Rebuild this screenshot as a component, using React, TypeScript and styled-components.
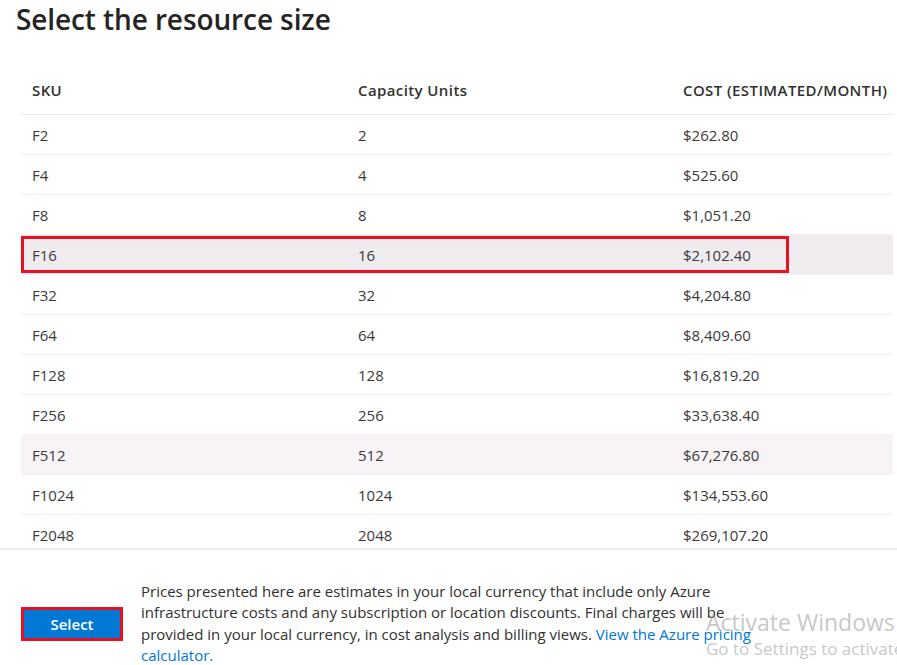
import React from "react";
import styled, { createGlobalStyle } from "styled-components";

const GlobalStyle = createGlobalStyle`
  html, body {
    margin: 0;
    padding: 0;
    background: #fff;
  }
  body {
    font-family: "Open Sans", "Noto Sans", "Liberation Sans", sans-serif;
    color: #323130;
    overflow: hidden;
  }
`;

const Page = styled.div`
  position: relative;
  width: 897px;
  height: 665px;
  overflow: hidden;
  display: flex;
  flex-direction: column;
`;

const Title = styled.h1`
  margin: 0;
  padding: 0 0 0 16px;
  height: 40px;
  flex-shrink: 0;
  line-height: 38px;
  font-size: 28px;
  font-weight: 600;
  color: #252423;
  letter-spacing: -0.1px;
`;

const TableArea = styled.div`
  margin-top: 30px;
  height: 478px;
  flex-shrink: 0;
  overflow: hidden;
  padding: 0 4px 0 21px;
`;

const Row = styled.div<{ $header?: boolean; $bg?: string; $boxed?: boolean }>`
  position: relative;
  display: grid;
  grid-template-columns: 326px 325px 1fr;
  align-items: center;
  height: ${(p) => (p.$header ? "45px" : "40px")};
  border-bottom: ${(p) => (p.$header ? "1px solid #edebe9" : "1px solid #f3f2f1")};
  box-sizing: border-box;
  background: ${(p) => p.$bg || "transparent"};
  font-size: 15px;
  letter-spacing: ${(p) => (p.$header ? "0.4px" : "0")};
  font-weight: ${(p) => (p.$header ? 600 : 400)};
  color: ${(p) => (p.$header ? "#323130" : "#3b3a39")};
  padding: ${(p) => (p.$header ? "0 0 4px" : "1px 0 0")};

  &::after {
    content: "";
    display: ${(p) => (p.$boxed ? "block" : "none")};
    position: absolute;
    left: 0;
    top: 1px;
    width: 768px;
    height: 37px;
    box-sizing: border-box;
    border: 3px solid #e81123;
  }
`;

const Cell = styled.div`
  padding-left: 11px;
  white-space: nowrap;
`;

const Footer = styled.div`
  flex-shrink: 0;
  border-top: 2px solid #edebe9;
  display: flex;
  align-items: flex-start;
  gap: 18px;
  padding: 31px 0 0 21px;
`;

const SelectButton = styled.button`
  width: 102px;
  height: 34px;
  margin-top: 26px;
  flex-shrink: 0;
  background: #0078d4;
  color: #fff;
  font-family: inherit;
  font-size: 15px;
  font-weight: 600;
  border: 3px solid #e81123;
  padding: 0;
  cursor: pointer;
`;

const Note = styled.p`
  margin: 0;
  width: 636px;
  font-size: 15px;
  line-height: 21.3px;
  color: #323130;
`;

const Link = styled.a`
  color: #0078d4;
  text-decoration: none;
`;

const Watermark = styled.div`
  position: absolute;
  left: 706px;
  top: 607px;
  color: rgba(150, 150, 150, 0.55);
  white-space: nowrap;
  pointer-events: none;
  .big {
    font-size: 23px;
    line-height: 30px;
  }
  .small {
    font-size: 17px;
    line-height: 24px;
  }
`;

const rows = [
  ["F2", "2", "$262.80"],
  ["F4", "4", "$525.60"],
  ["F8", "8", "$1,051.20"],
  ["F16", "16", "$2,102.40"],
  ["F32", "32", "$4,204.80"],
  ["F64", "64", "$8,409.60"],
  ["F128", "128", "$16,819.20"],
  ["F256", "256", "$33,638.40"],
  ["F512", "512", "$67,276.80"],
  ["F1024", "1024", "$134,553.60"],
  ["F2048", "2048", "$269,107.20"],
];

export default function App() {
  return (
    <>
      <GlobalStyle />
      <Page>
        <Title>Select the resource size</Title>
        <TableArea>
          <Row $header>
            <Cell>SKU</Cell>
            <Cell>Capacity Units</Cell>
            <Cell>COST (ESTIMATED/MONTH)</Cell>
          </Row>
          {rows.map(([sku, units, cost]) => (
            <Row
              key={sku}
              $boxed={sku === "F16"}
              $bg={sku === "F16" ? "#efebef" : sku === "F512" ? "#f7f3f6" : undefined}
            >
              <Cell>{sku}</Cell>
              <Cell>{units}</Cell>
              <Cell>{cost}</Cell>
            </Row>
          ))}
        </TableArea>
        <Footer>
          <SelectButton>Select</SelectButton>
          <Note>
            Prices presented here are estimates in your local currency that include only Azure
            infrastructure costs and any subscription or location discounts. Final charges will be
            provided in your local currency, in cost analysis and billing views.{" "}
            <Link href="#">View the Azure pricing calculator.</Link>
          </Note>
        </Footer>
        <Watermark>
          <div className="big">Activate Windows</div>
          <div className="small">Go to Settings to activate Windows.</div>
        </Watermark>
      </Page>
    </>
  );
}
